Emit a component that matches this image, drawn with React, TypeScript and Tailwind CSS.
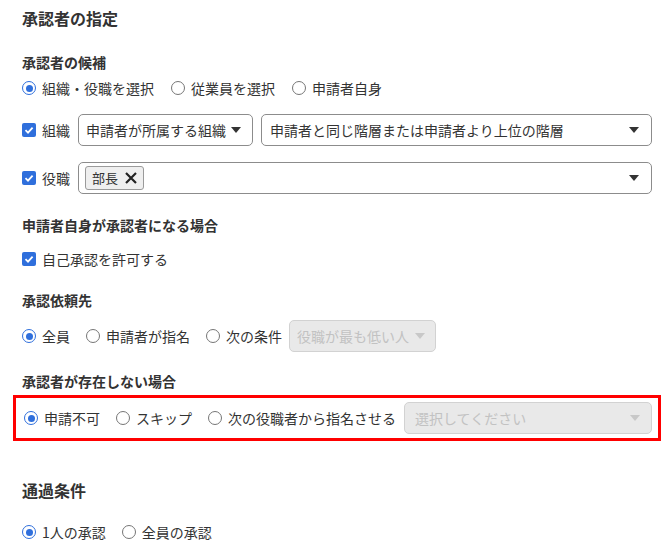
import React from "react"

const font = { fontFamily: '"Noto Sans CJK JP", "Noto Sans", sans-serif' }

function Radio({ label, checked }: { label: string; checked?: boolean }) {
  return (
    <label className="flex items-center gap-[6px] h-[20px]">
      <span
        className={
          "w-[14px] h-[14px] rounded-full flex items-center justify-center bg-white border-[1.5px] " +
          (checked ? "border-[#2f6fdc]" : "border-[#767676]")
        }
      >
        {checked && <span className="w-[7px] h-[7px] rounded-full bg-[#2f6fdc]" />}
      </span>
      <span>{label}</span>
    </label>
  )
}

function Check({ label }: { label: string }) {
  return (
    <label className="flex items-center gap-[6px] h-[20px]">
      <span className="w-[14px] h-[14px] rounded-[2px] bg-[#2f6fdc] flex items-center justify-center">
        <svg width="10" height="10" viewBox="0 0 10 10">
          <path d="M1.5 5.2 L4 7.6 L8.6 2.6" stroke="white" strokeWidth="1.8" fill="none" />
        </svg>
      </span>
      <span>{label}</span>
    </label>
  )
}

function Caret({ color = "#333" }: { color?: string }) {
  return (
    <svg width="10" height="6" viewBox="0 0 10 6">
      <path d="M0 0 L10 0 L5 6 Z" fill={color} />
    </svg>
  )
}

function Select({
  text,
  className = "",
  disabled,
}: {
  text?: string
  className?: string
  disabled?: boolean
}) {
  return (
    <div
      className={
        "h-[32px] rounded-[5px] border flex items-center justify-between " +
        (disabled
          ? "bg-[#e9e9e9] border-[#d2d2d2] text-[#c2c2c2] "
          : "bg-white border-[#8c8c8c] text-[#333] ") +
        className
      }
    >
      <span className="whitespace-nowrap">{text}</span>
      <Caret color={disabled ? "#c8c8c8" : "#333"} />
    </div>
  )
}

export default function App() {
  return (
    <div className="w-[670px] h-[556px] bg-white text-[#333] text-[14px] pl-[22px] pr-[18px] pt-[6px]" style={font}>
      <h1 className="h-[24px] leading-[24px] text-[16px] font-bold">承認者の指定</h1>

      <h2 className="mt-[22px] h-[20px] leading-[20px] font-bold">承認者の候補</h2>
      <div className="mt-[6px] flex items-center gap-[17px]">
        <Radio label="組織・役職を選択" checked />
        <Radio label="従業員を選択" />
        <Radio label="申請者自身" />
      </div>

      <div className="mt-[16px] flex items-center">
        <Check label="組織" />
        <Select text="申請者が所属する組織" className="ml-[8px] w-[175px] pl-[7px] pr-[11px]" />
        <Select text="申請者と同じ階層または申請者より上位の階層" className="ml-[8px] flex-1 pl-[8px] pr-[12px]" />
      </div>

      <div className="mt-[16px] flex items-center">
        <Check label="役職" />
        <div className="ml-[8px] flex-1 h-[32px] rounded-[5px] border border-[#8c8c8c] flex items-center justify-between pl-[6px] pr-[12px]">
          <span className="h-[24px] pl-[6px] pr-[5px] rounded-[3px] border border-[#9a9a9a] bg-[#efefef] flex items-center gap-[6px] text-[13px]">
            部長
            <svg width="14" height="14" viewBox="0 0 14 14">
              <path d="M2 2 L12 12 M12 2 L2 12" stroke="#222" strokeWidth="2.2" />
            </svg>
          </span>
          <Caret />
        </div>
      </div>

      <h2 className="mt-[21px] h-[20px] leading-[20px] font-bold">申請者自身が承認者になる場合</h2>
      <div className="mt-[14px] flex">
        <Check label="自己承認を許可する" />
      </div>

      <h2 className="mt-[21px] h-[20px] leading-[20px] font-bold">承認依頼先</h2>
      <div className="mt-[10px] flex items-center">
        <div className="flex items-center gap-[16px]">
          <Radio label="全員" checked />
          <Radio label="申請者が指名" />
          <Radio label="次の条件" />
        </div>
        <Select text="役職が最も低い人" disabled className="ml-[7px] w-[147px] pl-[7px] pr-[10px]" />
      </div>

      <h2 className="mt-[19px] h-[20px] leading-[20px] font-bold">承認者が存在しない場合</h2>
      <div className="mt-[4px] -mx-[9px] h-[46px] border-[3px] border-[#ff0000] pl-[8px] pr-[6px] flex items-center">
        <div className="flex items-center gap-[16px]">
          <Radio label="申請不可" checked />
          <Radio label="スキップ" />
          <Radio label="次の役職者から指名させる" />
        </div>
        <Select text="選択してください" disabled className="ml-[8px] flex-1 pl-[10px] pr-[11px]" />
      </div>

      <h2 className="mt-[37px] h-[24px] leading-[24px] text-[16px] font-bold">通過条件</h2>
      <div className="mt-[20px] flex items-center gap-[16px]">
        <Radio label="1人の承認" checked />
        <Radio label="全員の承認" />
      </div>
    </div>
  )
}
